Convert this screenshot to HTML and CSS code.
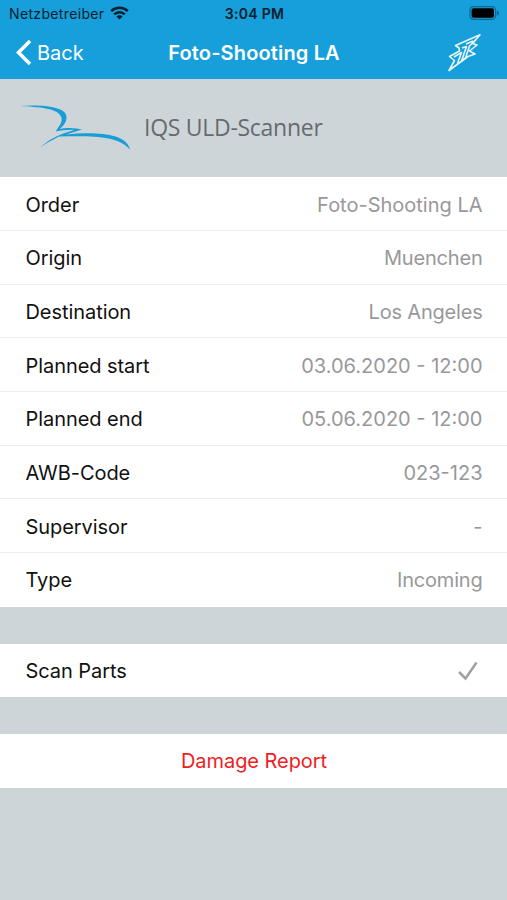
FILE: index.html
```html
<!DOCTYPE html>
<html lang="en">
<head>
<meta charset="utf-8">
<title>IQS ULD-Scanner</title>
<link rel="stylesheet" href="styles.css">
</head>
<body>
<header class="top">
  <div class="status">
    <div class="carrier"><span class="carrier-name">Netzbetreiber</span>
      <svg class="wifi" width="19" height="14" viewBox="0 0 19 14"><g fill="none" stroke="#03202e" stroke-width="2.5"><path d="M1.2 5.100a12 12 0 0 1 16.600 0"/><path d="M4.200 8.300a7.600 7.600 0 0 1 10.600 0"/></g><path d="M9.500 13.600 6.400 10.500a4.400 4.400 0 0 1 6.200 0z" fill="#03202e"/></svg>
    </div>
    <span class="time">3:04 PM</span>
    <svg class="battery" width="31" height="14" viewBox="0 0 31 14"><rect x="1" y=".7" width="25.600" height="12.600" rx="3.600" fill="none" stroke="#0b6690" stroke-width="1.200"/><rect x="2.600" y="2.200" width="22.400" height="9.600" rx="2" fill="#000"/><path d="M28 4.600q2 .8 2 2.400t-2 2.400z" fill="#0b6690"/></svg>
  </div>
  <nav class="nav">
    <a class="back"><svg width="17" height="27" viewBox="0 0 17 27"><path d="M15 2 3.500 13.500 15 25" fill="none" stroke="#fff" stroke-width="3.500"/></svg><span>Back</span></a>
    <h1 class="title">Foto-Shooting LA</h1>
    <svg class="flash" width="34" height="38" viewBox="0 0 34 38"><g fill="none" stroke="#e6f6ff" stroke-width="1.600" stroke-linejoin="round"><path d="M1 36.500 6.500 26.500 1.500 22.500 11.500 17 11 14 7.500 11.500 32 .8 24.500 9.500 29 11 21.500 17 27 20 20 22.500z"/><path d="M6 23 13.500 18.500 9.500 29.500M14 14 18.500 12.500 13.500 27 17.500 24 21.500 12 28 5.500M18 10 25 7"/></g></svg>
  </nav>
</header>
<section class="brand">
  <svg class="logo" width="112" height="48" viewBox="0 0 112 48"><path d="M0 2C20 .5 48 2 46.500 14 46 19 43 22 40 25 47 23 57 24 62 25.500 57 27.500 51 28.500 46 30.500 72 28 106 28 110 45.500 97 31 70 32 39 32.500 32 36 26 39.500 20 43.500 28 36 37 31 54 25.900 47 25.700 41 26.500 36 27.500 38 22 42.500 20 41.500 14 39.500 4 18 3 0 2z" fill="#189dd6"/></svg>
  <span class="brand-name">IQS ULD-Scanner</span>
</section>
<main>
  <div class="group">
    <div class="row"><span>Order</span><span class="value">Foto-Shooting LA</span></div>
    <div class="row"><span>Origin</span><span class="value tight">Muenchen</span></div>
    <div class="row"><span>Destination</span><span class="value tight">Los Angeles</span></div>
    <div class="row"><span>Planned start</span><span class="value">03.06.2020 - 12:00</span></div>
    <div class="row"><span>Planned end</span><span class="value">05.06.2020 - 12:00</span></div>
    <div class="row"><span>AWB-Code</span><span class="value">023-123</span></div>
    <div class="row"><span>Supervisor</span><span class="value">-</span></div>
    <div class="row"><span>Type</span><span class="value tight">Incoming</span></div>
  </div>
  <div class="group">
    <div class="row"><span>Scan Parts</span><svg class="check" width="20" height="20" viewBox="0 0 20 20"><path d="M1 11 7.500 17.500 18.500 1.500" fill="none" stroke="#a0a0a2" stroke-width="2.500"/></svg></div>
  </div>
  <div class="group">
    <div class="row danger"><span>Damage Report</span></div>
  </div>
</main>
</body>
</html>
```
FILE: styles.css
```css
* { box-sizing: border-box; }
body {
  margin: 0;
  min-height: 900px;
  background: #cdd5d9;
  font-family: Inter, "Liberation Sans", sans-serif;
  font-size: 20px;
  color: #111;
}
.top {
  height: 79px;
  background: #169fda;
}
.status {
  height: 27px;
  padding: 0 7px 0 9px;
  display: grid;
  grid-template-columns: 1fr auto 1fr;
  align-items: center;
  font-size: 14px;
  line-height: 27px;
  color: #03202e;
}
.carrier { display: flex; align-items: center; gap: 6px; }
.carrier-name { letter-spacing: 0.35px; }
.wifi { margin-top: -2px; }
.time { font-weight: 600; letter-spacing: 0.3px; }
.battery { justify-self: end; margin-top: -1px; }
.nav {
  height: 51px;
  padding: 0 25px 0 15px;
  display: grid;
  grid-template-columns: 1fr auto 1fr;
  align-items: center;
  color: #fff;
}
.back { display: flex; align-items: center; gap: 5px; }
.title { margin: 0 0 0 11px; font-size: 20px; font-weight: 600; letter-spacing: 0.15px; }
.flash { justify-self: end; }
.brand {
  height: 98.4px;
  padding: 0 0 0 20px;
  display: flex;
  align-items: center;
  gap: 12px;
}
.brand-name {
  margin-top: -3px;
  font-family: "Open Sans", "Noto Sans", sans-serif;
  font-size: 23px;
  letter-spacing: -0.28px;
  color: #666b6e;
}
main { display: flex; flex-direction: column; gap: 37px; }
.group { background: #fff; }
.row {
  height: 53.65px;
  padding: 2px 24.5px 0 25.5px;
  display: flex;
  align-items: center;
  justify-content: space-between;
  letter-spacing: -0.06px;
  border-bottom: 1px solid #ecedef;
}
.row:last-child { padding-top: 1px; border-bottom: 0; }
.value { letter-spacing: 0; color: #98989b; }
.tight { letter-spacing: -0.2px; }
.check { margin-right: 5px; }
.danger { justify-content: center; color: #f01c1f; }
```
